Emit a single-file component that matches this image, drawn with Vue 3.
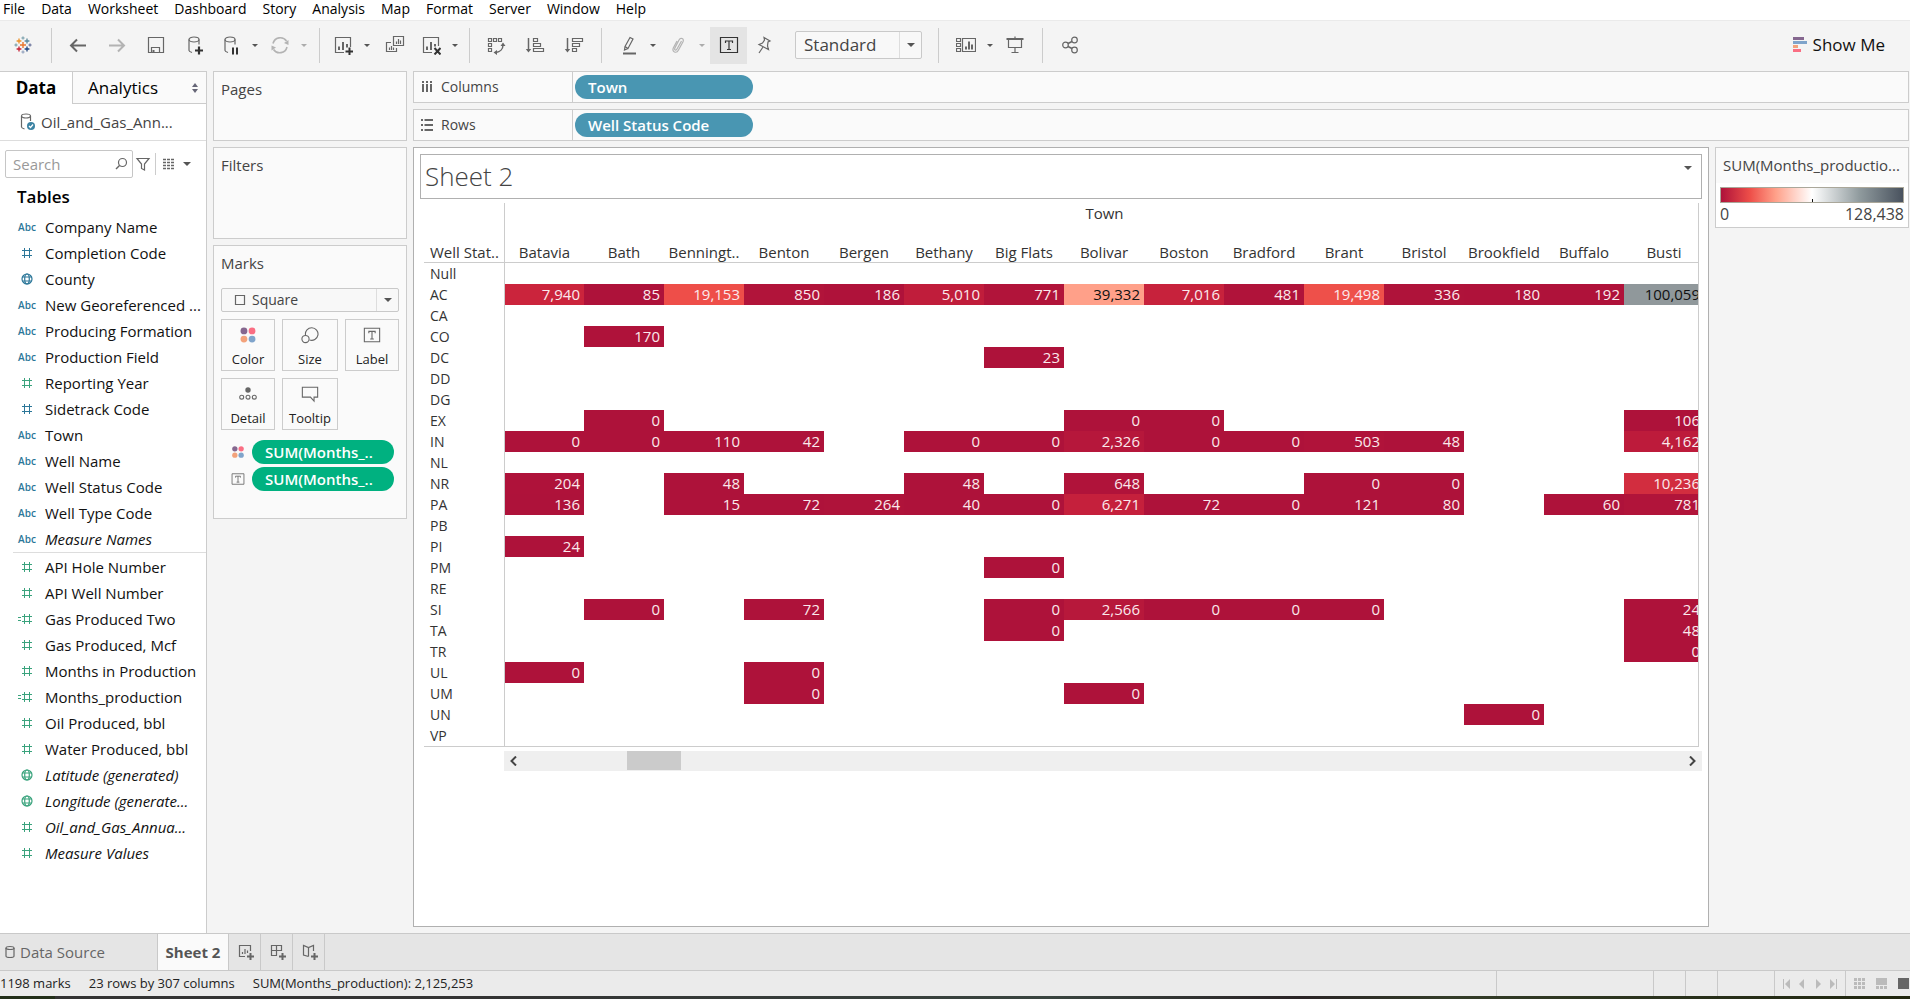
<script setup>
const menus = ['File', 'Data', 'Worksheet', 'Dashboard', 'Story', 'Analysis', 'Map', 'Format', 'Server', 'Window', 'Help']

const plus = (x, y, r, c, w = 1) => `<path d="M${x - r} ${y}H${x + r}M${x} ${y - r}V${y + r}" stroke="${c}" stroke-width="${w}"/>`

const icons = {
  logo:
    plus(10, 10, 3, '#e8762c', 1.4) + plus(6, 6, 2.4, '#eb9129', 1.3) + plus(14, 6, 2.4, '#59879b', 1.3) +
    plus(6, 14, 2.4, '#c72035', 1.3) + plus(14, 14, 2.4, '#1f447e', 1.3) + plus(10, 3, 1.6, '#7099a6') +
    plus(10, 17, 1.6, '#8a9ab8') + plus(3, 10, 1.6, '#7099a6') + plus(17, 10, 1.6, '#5b6591'),
  back: '<path d="M18 10.500H3M9 4.500L3 10.500l6 6" stroke-width="2"/>',
  forward: '<path d="M2 10.500h15M11 4.500l6 6-6 6" stroke-width="2"/>',
  save: '<path d="M2.500 2.500h15v15h-15zM5.500 17.500v-5h8v5"/><path d="M7.500 17.500v-2.500" stroke-width="2"/>',
  addData: '<ellipse cx="9" cy="4.500" rx="5" ry="2.500"/><path d="M4 4.500v11c0 1 1.500 1.500 3 2M14 4.500v5"/><path d="M14 11.500v8M10 15.500h8" stroke="#333" stroke-width="2.200"/>',
  pauseData: '<ellipse cx="9" cy="4.500" rx="5" ry="2.500"/><path d="M4 4.500v11c0 1 1.500 1.500 3 2M14 4.500v5"/><path d="M12 12.500v7M16 12.500v7" stroke="#333" stroke-width="2"/>',
  refresh: '<path d="M3 8.500a7.500 7.500 0 0 1 13.500-2.500M17 12a7.500 7.500 0 0 1-13.500 2.500" stroke-width="1.600"/><path d="M18.500 5v5l-4.500-2zM1.500 15.500v-5l4.500 2z" fill="currentColor" stroke="none"/>',
  newSheet: '<path d="M11 17.500H2.500v-15h15V12"/><path d="M6 15v-3.500M10 15V7M14 12.500V9" stroke-width="2"/><path d="M16.500 12.500v8M12.500 16.500h8" stroke="#333" stroke-width="2"/>',
  duplicate: '<path d="M8.500 1.500h10v9h-10zM11.500 9V6.500M13.500 9V4M15.500 9V5.500M6 7.500H1.500v9h10V13M4.500 15v-2.500M6.500 15v-4M8.500 15v-2.500"/>',
  clear: '<path d="M11 17.500H2.500v-15h15V11"/><path d="M6 15v-3.500M10 15V7M14 11.500V9" stroke-width="2"/><path d="M13.500 13l6 6.500M19.500 13l-6 6.500" stroke="#333" stroke-width="2"/>',
  swap: '<path d="M2.500 3.500h3v3h-3zM7.500 3.500h3v3h-3zM12.500 3.500h3v3h-3zM2.500 8.500h3v3h-3zM2.500 13.500h3v3h-3z"/><path d="M17 10c0 4-3 7-7 7.500" stroke-width="1.500"/><path d="M17 7.500l2.500 3.500h-5zM7.500 17.500l3.500-2.500v5z" fill="currentColor" stroke="none"/>',
  sortAsc: '<path d="M3.500 3v12" stroke-width="1.500"/><path d="M3.500 17.500L.8 14h5.400z" fill="currentColor" stroke="none"/><path d="M8.500 3.500h4v3h-4zM8.500 8.500h7v3h-7zM8.500 13.500h10v3h-10z"/>',
  sortDesc: '<path d="M3.500 3v12" stroke-width="1.500"/><path d="M3.500 17.500L.8 14h5.400z" fill="currentColor" stroke="none"/><path d="M8.500 3.500h10v3h-10zM8.500 8.500h7v3h-7zM8.500 13.500h4v3h-4z"/>',
  highlight: '<path d="M6 11.500L11 2.500l3 1.500-5 9.500-3-2zM6 11.500l-.5 3.500L9 13.500"/><path d="M4 18.500h13" stroke-width="2"/>',
  clip: '<path d="M13.500 6L9 14c-1 2-3 1-2.200-.8L11 5c1.500-3 5.500-1.500 4 1.800L10.500 15c-2 4-7 2-5.200-2L9 6"/>',
  label: '<path d="M1.500 2.500h17v15h-17z"/><path d="M6.500 8V6h7v2M10 6v8.500M8 14.500h4"/>',
  pin: '<path d="M10 2.500l6 3.500-2 1-.5 4 1 3.500L5 9.500l3.500-1.500L10.500 5zM9 12l-4 6"/>',
  cards: '<path d="M.5 3.500h4v3h-4zM.5 8.500h4v3h-4zM.5 13.500h4v3h-4zM6.500 3.500h13v13h-13z"/><path d="M10 14.500v-3M13 14.500v-8M16 14.500v-5" stroke-width="2"/>',
  present: '<path d="M3.500 4v8.500h13V4M10 12.500v5M6.500 17.500h7M10 1.500v2"/><path d="M1.500 4h17" stroke-width="2"/>',
  share: '<circle cx="5.500" cy="10" r="2.800"/><circle cx="14.500" cy="5" r="2.800"/><circle cx="14.500" cy="15" r="2.800"/><path d="M8 8.500l4-2M8 11.500l4 2" stroke-width="1.500"/>',
  bars: '<path d="M3 3.500h11" stroke="#85678f" stroke-width="3"/><path d="M3 7.500h14" stroke="#7fa4cb" stroke-width="3"/><path d="M3 11.500h5" stroke="#f3a27b" stroke-width="3"/><path d="M3 15.500h8" stroke="#fa6e83" stroke-width="3"/>',
  source: '<ellipse cx="8" cy="4" rx="4.500" ry="2"/><path d="M3.500 4v11c0 1 1.500 1.500 3 2M12.500 4v5"/><circle cx="13" cy="14" r="4" fill="#3c83a3" stroke="none"/><path d="M11 14l1.500 1.500L15 12.500" stroke="#fff"/>',
  db: '<ellipse cx="10" cy="6" rx="4" ry="1.500"/><path d="M6 6v8c0 2 8 2 8 0V6"/>',
  search: '<circle cx="11.500" cy="8.500" r="4"/><path d="M8.500 11.500L5 15" stroke-width="1.500"/>',
  funnel: '<path d="M4 4.500h12l-4.500 5.500v6l-3-1.500V10z"/>',
  list: '<path d="M4 5.500h12M4 8.500h12M4 11.500h12M4 14.500h12" stroke-width="1.500" stroke-dasharray="3 1"/>',
  color: '<g stroke="none"><circle cx="5.500" cy="5.500" r="3.800" fill="#85678f"/><circle cx="14.500" cy="5.500" r="3.800" fill="#fa6e83"/><circle cx="5.500" cy="14.500" r="3.800" fill="#f3a27b"/><circle cx="14.500" cy="14.500" r="3.800" fill="#7fa4cb"/></g>',
  size: '<path d="M5 10A7 7 0 1 1 9.500 15.500"/><circle cx="5" cy="14.500" r="4"/>',
  detail: '<circle cx="10" cy="5.500" r="3" fill="currentColor" stroke="none"/><circle cx="3" cy="13.500" r="2.200"/><circle cx="10" cy="13.500" r="2.200"/><circle cx="17" cy="13.500" r="2.200"/>',
  tooltip: '<path d="M1.500 2.500h17v11h-4V18l-4-4.500h-9z"/>',
  square: '<path d="M5.500 5.500h9v9h-9z"/>',
  columns: '<path d="M6 4v2M10 4v2M14 4v2M6 7v8M10 7v8M14 7v8" stroke-width="2"/>',
  rows: '<path d="M4 5h2M4 10h2M4 15h2M7.500 5H16M7.500 10H16M7.500 15H16" stroke-width="2"/>',
  hash: '<path d="M5 7.500h10M5 12.500h10M7.500 5v10M12.500 5v10" stroke-width="1"/>',
  calc: '<path d="M1 8.500h3M1 11.500h3M5 7.500h10M5 12.500h10M7.500 5v10M12.500 5v10" stroke-width="1"/>',
  globe: '<circle cx="10" cy="10" r="5"/><ellipse cx="10" cy="10" rx="2.300" ry="5"/><path d="M5.500 8h9M5.500 12h9"/>',
  tabSheet: '<path d="M10 14.500H4.500v-11h11V9M7.500 12v-2M10 12V7M12.500 11V8.500"/><path d="M15.500 11v7M12 14.500h7" stroke-width="2"/>',
  tabDash: '<path d="M10 13.500H4.500v-10h10V9M4.500 8.500h10M9.500 3.500v10"/><path d="M15.500 11v7M12 14.500h7" stroke-width="2"/>',
  tabStory: '<path d="M9.500 14.500l-5-1.500V3.500l5 2 5-2V9M9.500 5.500v9"/><path d="M15.500 11v7M12 14.500h7" stroke-width="2"/>'
}

const toolbar = [
  { name: 'start', items: [{ icon: 'logo', label: 'Start page' }] },
  {
    name: 'file',
    items: [
      { icon: 'back', label: 'Undo' },
      { icon: 'forward', label: 'Redo', off: true },
      { icon: 'save', label: 'Save' },
      { icon: 'addData', label: 'New data source' },
      { icon: 'pauseData', label: 'Pause auto updates', caret: true },
      { icon: 'refresh', label: 'Run update', caret: true, off: true }
    ]
  },
  {
    name: 'make',
    items: [
      { icon: 'newSheet', label: 'New worksheet', caret: true },
      { icon: 'duplicate', label: 'Duplicate' },
      { icon: 'clear', label: 'Clear sheet', caret: true }
    ]
  },
  {
    name: 'sort',
    items: [
      { icon: 'swap', label: 'Swap rows and columns' },
      { icon: 'sortAsc', label: 'Sort ascending' },
      { icon: 'sortDesc', label: 'Sort descending' }
    ]
  },
  {
    name: 'format',
    items: [
      { icon: 'highlight', label: 'Highlight', caret: true },
      { icon: 'clip', label: 'Group members', caret: true, off: true },
      { icon: 'label', label: 'Show mark labels', on: true },
      { icon: 'pin', label: 'Fix axes', slim: true }
    ]
  },
  {
    name: 'view',
    items: [
      { icon: 'cards', label: 'Show or hide cards', caret: true },
      { icon: 'present', label: 'Presentation mode', slim: true }
    ]
  },
  { name: 'share', items: [{ icon: 'share', label: 'Share' }] }
]

const dimensions = [
  ['abc', 'Company Name'], ['hash', 'Completion Code'], ['globe', 'County'], ['abc', 'New Georeferenced ...'],
  ['abc', 'Producing Formation'], ['abc', 'Production Field'], ['hash', 'Reporting Year', 'green'],
  ['hash', 'Sidetrack Code'], ['abc', 'Town'], ['abc', 'Well Name'], ['abc', 'Well Status Code'],
  ['abc', 'Well Type Code'], ['abc', 'Measure Names', 'italic']
]
const measures = [
  ['hash', 'API Hole Number'], ['hash', 'API Well Number'], ['calc', 'Gas Produced Two'], ['hash', 'Gas Produced, Mcf'],
  ['hash', 'Months in Production'], ['calc', 'Months_production'], ['hash', 'Oil Produced, bbl'],
  ['hash', 'Water Produced, bbl'], ['globe', 'Latitude (generated)', 'italic'], ['globe', 'Longitude (generate...', 'italic'],
  ['hash', 'Oil_and_Gas_Annua...', 'italic'], ['hash', 'Measure Values', 'italic']
]
const markButtons = [['color', 'Color'], ['size', 'Size'], ['label', 'Label'], ['detail', 'Detail'], ['tooltip', 'Tooltip']]

const towns = ['Batavia', 'Bath', 'Benningt..', 'Benton', 'Bergen', 'Bethany', 'Big Flats', 'Bolivar', 'Boston', 'Bradford', 'Brant', 'Bristol', 'Brookfield', 'Buffalo', 'Busti']
const codes = ['Null', 'AC', 'CA', 'CO', 'DC', 'DD', 'DG', 'EX', 'IN', 'NL', 'NR', 'PA', 'PB', 'PI', 'PM', 'RE', 'SI', 'TA', 'TR', 'UL', 'UM', 'UN', 'VP']
const values = {
  AC: [7940, 85, 19153, 850, 186, 5010, 771, 39332, 7016, 481, 19498, 336, 180, 192, 100059],
  CO: { 1: 170 },
  DC: { 6: 23 },
  EX: { 1: 0, 7: 0, 8: 0, 14: 106 },
  IN: { 0: 0, 1: 0, 2: 110, 3: 42, 5: 0, 6: 0, 7: 2326, 8: 0, 9: 0, 10: 503, 11: 48, 14: 4162 },
  NR: { 0: 204, 2: 48, 5: 48, 7: 648, 10: 0, 11: 0, 14: 10236 },
  PA: { 0: 136, 2: 15, 3: 72, 4: 264, 5: 40, 6: 0, 7: 6271, 8: 72, 9: 0, 10: 121, 11: 80, 13: 60, 14: 781 },
  PI: { 0: 24 },
  PM: { 6: 0 },
  SI: { 1: 0, 3: 72, 6: 0, 7: 2566, 8: 0, 9: 0, 10: 0, 14: 24 },
  TA: { 6: 0, 14: 48 },
  TR: { 14: 0 },
  UL: { 0: 0, 3: 0 },
  UM: { 3: 0, 7: 0 },
  UN: { 12: 0 }
}
const stops = [
  [0, 174, 18, 58], [8000, 203, 36, 60], [19300, 238, 79, 73], [39332, 255, 160, 137],
  [64219, 255, 255, 255], [100059, 144, 152, 155], [128438, 73, 82, 94]
]
function heat(v) {
  const i = Math.max(1, stops.findIndex(s => s[0] >= v))
  const [a, b] = [stops[i - 1], stops[i]]
  const t = (v - a[0]) / (b[0] - a[0])
  return `rgb(${[1, 2, 3].map(k => Math.round(a[k] + (b[k] - a[k]) * t)).join(',')})`
}
const grid = codes.map(code => ({
  code,
  cells: towns.map((_, i) => {
    const v = values[code]?.[i]
    return v === undefined ? null : { text: v.toLocaleString('en-US'), color: heat(v), dark: v > 30000 }
  })
}))
</script>

<template>
  <div class="app">
    <nav class="menu" aria-label="Main menu">
      <a v-for="m in menus" :key="m" href="#">{{ m }}</a>
    </nav>

    <div class="toolbar" role="toolbar" aria-label="Toolbar">
      <div v-for="g in toolbar" :key="g.name" class="group" :class="'group-' + g.name">
        <template v-for="b in g.items" :key="b.icon">
          <button type="button" class="tool" :class="{ slim: b.caret || b.slim, off: b.off, on: b.on }" :aria-label="b.label">
            <svg class="ico" viewBox="0 0 20 20" v-html="icons[b.icon]"></svg>
          </button>
          <button v-if="b.caret" type="button" class="drop" :class="{ off: b.off }" :aria-label="b.label + ' options'"><i class="caret"></i></button>
        </template>
        <div v-if="g.name === 'format'" class="pick fit">
          <select aria-label="Fit"><option>Standard</option></select>
          <span class="arrow"><i class="caret big"></i></span>
        </div>
      </div>
      <button type="button" class="show-me"><svg class="ico" viewBox="0 0 20 20" v-html="icons.bars"></svg>Show Me</button>
    </div>

    <main class="work">
      <aside class="data">
        <div class="pane-tabs">
          <button type="button" class="pane-tab active">Data</button>
          <button type="button" class="pane-tab other">Analytics<svg class="updown" viewBox="0 0 8 10"><path d="M4 0l3 4H1zM4 10l3-4H1z" /></svg></button>
        </div>
        <div class="source"><svg class="ico" viewBox="0 0 20 20" v-html="icons.source"></svg>Oil_and_Gas_Ann...</div>
        <div class="find">
          <label class="search"><input type="text" placeholder="Search" aria-label="Search fields" /><svg class="ico" viewBox="0 0 20 20" v-html="icons.search"></svg></label>
          <button type="button" class="mini" aria-label="Filter"><svg class="ico" viewBox="0 0 20 20" v-html="icons.funnel"></svg></button>
          <button type="button" class="mini view-by" aria-label="View as"><svg class="ico" viewBox="0 0 20 20" v-html="icons.list"></svg><i class="caret big"></i></button>
        </div>
        <h2>Tables</h2>
        <ul class="fields dims">
          <li v-for="[icon, name, mod] in dimensions" :key="name" :class="mod">
            <span v-if="icon === 'abc'" class="abc">Abc</span>
            <svg v-else class="ico" viewBox="0 0 20 20" v-html="icons[icon]"></svg>
            <span class="name">{{ name }}</span>
          </li>
        </ul>
        <ul class="fields meas">
          <li v-for="[icon, name, mod] in measures" :key="name" class="green" :class="mod">
            <svg class="ico" viewBox="0 0 20 20" v-html="icons[icon]"></svg>
            <span class="name">{{ name }}</span>
          </li>
        </ul>
      </aside>

      <section class="cards">
        <div class="card pages"><h3>Pages</h3></div>
        <div class="card filters"><h3>Filters</h3></div>
        <div class="card marks">
          <h3>Marks</h3>
          <div class="pick mark-type">
            <svg class="ico" viewBox="0 0 20 20" v-html="icons.square"></svg>
            <select aria-label="Mark type"><option>Square</option></select>
            <span class="arrow"><i class="caret big"></i></span>
          </div>
          <div class="mark-grid">
            <button v-for="[icon, name] in markButtons" :key="name" type="button"><svg class="ico" viewBox="0 0 20 20" v-html="icons[icon]"></svg>{{ name }}</button>
          </div>
          <div v-for="icon in ['color', 'label']" :key="icon" class="encoding">
            <svg class="ico" viewBox="0 0 20 20" v-html="icons[icon]"></svg>
            <button type="button" class="pill green-pill">SUM(Months_..</button>
          </div>
        </div>
      </section>

      <section class="canvas">
        <div class="shelf">
          <div class="shelf-name"><svg class="ico" viewBox="0 0 20 20" v-html="icons.columns"></svg>Columns</div>
          <button type="button" class="pill">Town</button>
        </div>
        <div class="shelf">
          <div class="shelf-name"><svg class="ico" viewBox="0 0 20 20" v-html="icons.rows"></svg>Rows</div>
          <button type="button" class="pill">Well Status Code</button>
        </div>
        <div class="stage">
          <div class="sheet">
            <header class="title"><h1>Sheet 2</h1><button type="button" class="title-menu" aria-label="Title menu"><i class="caret big"></i></button></header>
            <div class="viz">
              <table>
                <colgroup><col v-for="n in towns.length + 1" :key="n" /></colgroup>
                <thead>
                  <tr class="over"><td></td><th :colspan="towns.length" scope="colgroup">Town</th></tr>
                  <tr class="heads"><th scope="col">Well Stat..</th><th v-for="t in towns" :key="t" scope="col">{{ t }}</th></tr>
                </thead>
                <tbody>
                  <tr v-for="r in grid" :key="r.code">
                    <th scope="row">{{ r.code }}</th>
                    <td v-for="(c, i) in r.cells" :key="i" :class="{ dark: c && c.dark }" :style="c ? { background: c.color } : null">{{ c ? c.text : '' }}</td>
                  </tr>
                </tbody>
              </table>
            </div>
            <div class="scroll">
              <button type="button" aria-label="Scroll left"><svg viewBox="0 0 10 10"><path d="M7 0.500L2.500 5L7 9.500" /></svg></button>
              <div class="track"><div class="thumb"></div></div>
              <button type="button" aria-label="Scroll right"><svg viewBox="0 0 10 10"><path d="M3 0.500L7.500 5L3 9.500" /></svg></button>
            </div>
          </div>
          <aside class="legend">
            <h3>SUM(Months_productio...</h3>
            <div class="ramp"></div>
            <div class="range"><span>0</span><span>128,438</span></div>
          </aside>
        </div>
      </section>
    </main>

    <div class="tabs">
      <button type="button" class="tab ds"><svg class="ico" viewBox="0 0 20 20" v-html="icons.db"></svg>Data Source</button>
      <button type="button" class="tab current">Sheet 2</button>
      <button type="button" class="tab add" aria-label="New worksheet"><svg class="ico" viewBox="0 0 20 20" v-html="icons.tabSheet"></svg></button>
      <button type="button" class="tab add" aria-label="New dashboard"><svg class="ico" viewBox="0 0 20 20" v-html="icons.tabDash"></svg></button>
      <button type="button" class="tab add" aria-label="New story"><svg class="ico" viewBox="0 0 20 20" v-html="icons.tabStory"></svg></button>
    </div>

    <footer class="status">
      <div class="facts"><span>1198 marks</span><span>23 rows by 307 columns</span><span>SUM(Months_production): 2,125,253</span></div>
      <div class="slot wide"></div>
      <div class="slot"></div>
      <div class="slot"></div>
      <div class="slot mid"></div>
      <div class="slot nav">
        <button type="button" aria-label="First"><svg viewBox="0 0 8 10"><path d="M7 0v10L2 5zM0 0h1v10H0z" /></svg></button>
        <button type="button" aria-label="Previous"><svg viewBox="0 0 8 10"><path d="M6 0v10L1 5z" /></svg></button>
        <button type="button" aria-label="Next"><svg viewBox="0 0 8 10"><path d="M2 0v10l5-5z" /></svg></button>
        <button type="button" aria-label="Last"><svg viewBox="0 0 8 10"><path d="M1 0v10l5-5zM7 0h1v10H7z" /></svg></button>
      </div>
      <div class="slot modes">
        <button type="button" aria-label="Sheet sorter"><svg viewBox="0 0 11 11"><path d="M0 0h3v3H0zM4 0h3v3H4zM8 0h3v3H8zM0 4h3v3H0zM4 4h3v3H4zM8 4h3v3H8zM0 8h3v3H0zM4 8h3v3H4zM8 8h3v3H8z" /></svg></button>
        <button type="button" aria-label="Filmstrip"><svg viewBox="0 0 11 11"><path d="M0 0h11v7H0zM0 8h3v3H0zM4 8h3v3H4zM8 8h3v3H8z" /></svg></button>
        <button type="button" aria-label="Tabs" class="lit"><svg viewBox="0 0 11 11"><path d="M0 0h11v11H0z" /></svg></button>
      </div>
    </footer>
    <div class="edge"></div>
  </div>
</template>

<style>
body { margin: 0; background: #f4f4f4; }
</style>

<style scoped>
* { box-sizing: border-box; }
.app { min-height: 100vh; display: flex; flex-direction: column; overflow: hidden; background: #f4f4f4; color: #444; font: 15px/20px "Open Sans", "Noto Sans", sans-serif; }
button, select, input { font: inherit; color: inherit; margin: 0; padding: 0; border: 0; background: none; }
h1, h2, h3, ul { margin: 0; padding: 0; font-weight: 400; list-style: none; }
.ico { width: 20px; height: 20px; flex: none; fill: none; stroke: currentColor; stroke-width: 1.2; color: #666; display: block; }
.caret { display: block; border: solid transparent; border-top-color: #555; border-width: 3px 3px 0; }
.caret.big { border-width: 4px 4px 0; }

.menu { display: flex; gap: 16px; height: 20px; padding-left: 3px; background: #fff; }
.menu a { color: #000; text-decoration: none; font-size: 14px; line-height: 18px; }

.toolbar { display: flex; align-items: center; height: 51px; padding-bottom: 2px; border-top: 1px solid #eaeaea; }
.group { display: flex; align-items: center; height: 35px; padding: 0 7px; border-right: 1px solid #ccc; }
.group-start { padding: 0 9px 0 3px; }
.group-file { padding-left: 6px; }
.group-make { padding: 0 6px; }
.group-sort { padding: 0 8px 0 6px; }
.group-format { padding: 0 16px 0 10px; }
.group-view { padding: 0 11px 0 10px; }
.group-share { border: 0; }
.tool { width: 39px; height: 37px; display: grid; place-items: center; flex: none; }
.tool.slim { width: 33px; }
.tool.on { width: 37px; background: #e4e4e4; }
.tool.on .ico { color: #333; }
.drop { width: 16px; height: 37px; display: grid; place-items: center; flex: none; }
.off { opacity: .45; }
.pick { position: relative; display: flex; align-items: center; border: 1px solid #c9c9c9; border-radius: 2px; background: #f8f8f8; }
.pick select { appearance: none; width: 100%; height: 100%; padding: 0 30px 0 8px; outline: 0; }
.arrow { position: absolute; right: 0; top: 0; bottom: 0; width: 22px; border-left: 1px solid #ddd; display: grid; place-items: center; pointer-events: none; }
.fit { width: 127px; height: 28px; margin-left: 15px; font-size: 17px; }
.show-me { display: flex; align-items: center; gap: 3px; margin-left: auto; padding-right: 25px; color: #111; font-size: 17px; }

.work { flex: 1; display: flex; min-height: 0; }
.data { width: 207px; flex: none; background: #fff; border: solid #ccc; border-width: 1px 1px 0 0; }
.pane-tabs { display: flex; height: 32px; }
.pane-tab { color: #000; font-size: 17px; }
.pane-tab.active { width: 72px; font-weight: 700; }
.pane-tab.other { flex: 1; display: flex; align-items: center; justify-content: space-between; padding: 0 7px 0 15px; background: #fafafa; border: solid #ccc; border-width: 0 0 1px 1px; }
.updown { width: 8px; height: 10px; fill: #667; }
.source { display: flex; align-items: center; gap: 3px; height: 37px; padding-left: 18px; border-bottom: 1px solid #ddd; }
.find { display: flex; align-items: center; padding: 9px 0 0 5px; }
.search { display: flex; align-items: center; width: 128px; height: 28px; padding: 0 1px 0 7px; border: 1px solid #c6c6c6; border-radius: 2px; }
.search input { width: 100%; min-width: 0; outline: 0; }
.search input::placeholder { color: #999; opacity: 1; }
.mini { display: flex; align-items: center; height: 22px; }
.view-by { gap: 4px; margin-left: 2px; padding-left: 3px; border-left: 1px solid #ccc; }
.data h2 { padding: 8px 0 0 17px; font-size: 17px; line-height: 22px; font-weight: 600; color: #000; }
.fields li { display: flex; align-items: center; height: 26px; padding-left: 17px; color: #2c7799; }
.fields .ico { color: inherit; }
.fields .green { color: #3aa37d; }
.fields .name { margin-left: 8px; color: #111; white-space: nowrap; }
.fields .italic .name { font-style: italic; }
.abc { width: 20px; text-align: center; font-size: 10px; font-weight: 600; }
.dims { padding-top: 6px; }
.meas { margin-left: 13px; border-top: 1px solid #ddd; padding-top: 1px; }
.meas li { padding-left: 4px; }

.cards { width: 194px; flex: none; margin-left: 6px; display: flex; flex-direction: column; gap: 6px; }
.card { padding: 7px; background: #fafafa; border: 1px solid #ccc; }
.card h3 { font-size: 15px; line-height: 20px; }
.pages { height: 70px; }
.filters { height: 92px; }
.marks { height: 274px; }
.mark-type { height: 24px; margin-top: 15px; padding-left: 8px; font-size: 14px; }
.mark-type select { padding-left: 2px; }
.mark-grid { display: grid; grid-template-columns: 54px 56px 54px; gap: 7px; margin-top: 7px; }
.mark-grid button { height: 52px; padding-top: 5px; display: flex; flex-direction: column; align-items: center; gap: 4px; border: 1px solid #ccc; background: #fafafa; font-size: 13px; color: #222; }
.mark-grid .ico { width: 18px; height: 20px; }
.encoding { display: flex; align-items: center; gap: 7px; margin-top: 3px; padding-left: 10px; }
.mark-grid + .encoding { margin-top: 10px; }
.encoding .ico { width: 14px; height: 14px; }
.pill { width: 178px; height: 24px; padding: 0 13px; border-radius: 12px; background: #4996b2; color: #fff; text-align: left; font-weight: 600; }
.green-pill { width: 142px; background: #00b180; }

.canvas { flex: 1; min-width: 0; margin: 0 1px 0 6px; display: flex; flex-direction: column; }
.shelf { display: flex; align-items: center; height: 32px; margin-bottom: 6px; background: #fafafa; border: 1px solid #ccc; flex: none; }
.shelf-name { display: flex; align-items: center; gap: 4px; width: 159px; height: 100%; margin-right: 2px; padding-left: 3px; border-right: 1px solid #ccc; font-size: 14px; }
.stage { flex: 1; display: flex; align-items: flex-start; gap: 6px; }
.sheet { flex: 1; min-width: 0; align-self: stretch; margin-bottom: 6px; padding: 6px; background: #fff; border: 1px solid #b0b0b0; }
.title { display: flex; justify-content: space-between; align-items: flex-start; height: 45px; padding-left: 4px; border: 1px solid #b0b0b0; }
.title h1 { font-size: 26px; line-height: 43px; color: #444; font-weight: 300; }
.title-menu { padding: 11px 9px 0; }
.viz { margin: 4px 3px 0 4px; overflow: hidden; border: solid #ccc; border-width: 0 1px 1px 0; }
table { border-collapse: separate; border-spacing: 0; table-layout: fixed; width: 1280px; color: #333; }
th, td { padding: 0; height: 21px; line-height: 21px; font-weight: 400; white-space: nowrap; }
tr > :first-child { text-align: left; padding-left: 6px; }
tr > :nth-child(2) { border-left: 1px solid #ccc; }
.over > * { height: 39px; line-height: 20px; vertical-align: top; }
.heads > * { border-bottom: 1px solid #ccc; line-height: 20px; }
tbody th { font-size: 14px; }
tbody td { text-align: right; padding-right: 4px; color: #fbe9ec; }
tbody td.dark { color: #111; }
.scroll { display: flex; height: 20px; margin: 4px 0 0 84px; background: #efefef; }
.scroll button { width: 20px; display: grid; place-items: center; }
.scroll svg { width: 10px; height: 10px; fill: none; stroke: #444; stroke-width: 2; }
.track { flex: 1; }
.thumb { width: 54px; height: 19px; margin-left: 103px; background: #cbcbcb; }
.legend { width: 194px; flex: none; padding-bottom: 3px; background: #fff; border: 1px solid #ccc; }
.legend h3 { height: 35px; padding-left: 7px; background: #fafafa; line-height: 35px; font-size: 15px; white-space: nowrap; overflow: hidden; }
.ramp { height: 16px; margin: 4px 4px 1px; border: 1px solid #aaa79a; background: linear-gradient(#111, #111) 50% 100% / 1px 3px no-repeat, linear-gradient(90deg, #ae123a, #ee4f49 16%, #ffa089 30%, #fff 50%, #909b9e 76%, #49525e); }
.range { display: flex; justify-content: space-between; padding: 0 4px; font-size: 16px; }

.tabs { display: flex; height: 38px; background: #e5e5e5; border: solid #c9c9c9; border-width: 1px 0; }
.tab { display: flex; align-items: center; border-right: 1px solid #c9c9c9; color: #666; flex: none; }
.tab.ds { width: 158px; }
.tab.current { width: 71px; justify-content: center; background: #fafafa; font-weight: 700; color: #555; }
.tab.add { width: 32px; justify-content: center; }
.status { display: flex; height: 25px; background: #ebebeb; color: #222; font-size: 13px; line-height: 24px; }
.facts { flex: 1; display: flex; gap: 18px; white-space: nowrap; }
.slot { border-left: 1px solid #c9c9c9; width: 32px; }
.slot.wide { width: 157px; }
.slot.mid { width: 57px; }
.slot.nav { width: 71px; display: flex; align-items: center; justify-content: space-between; padding: 0 8px; }
.slot.modes { width: 65px; display: flex; align-items: center; justify-content: space-between; padding: 0 1px 0 8px; }
.slot button { display: flex; }
.slot svg { width: 8px; height: 10px; fill: #bbb; }
.modes svg { width: 11px; height: 11px; }
.modes .lit svg { fill: #666; }
.edge { height: 3px; background: linear-gradient(90deg, #23301a 0 55px, #333 55px 485px, #39443f 1050px, #2a2426 1300px, #333c28 1450px, #20260f); }
</style>
